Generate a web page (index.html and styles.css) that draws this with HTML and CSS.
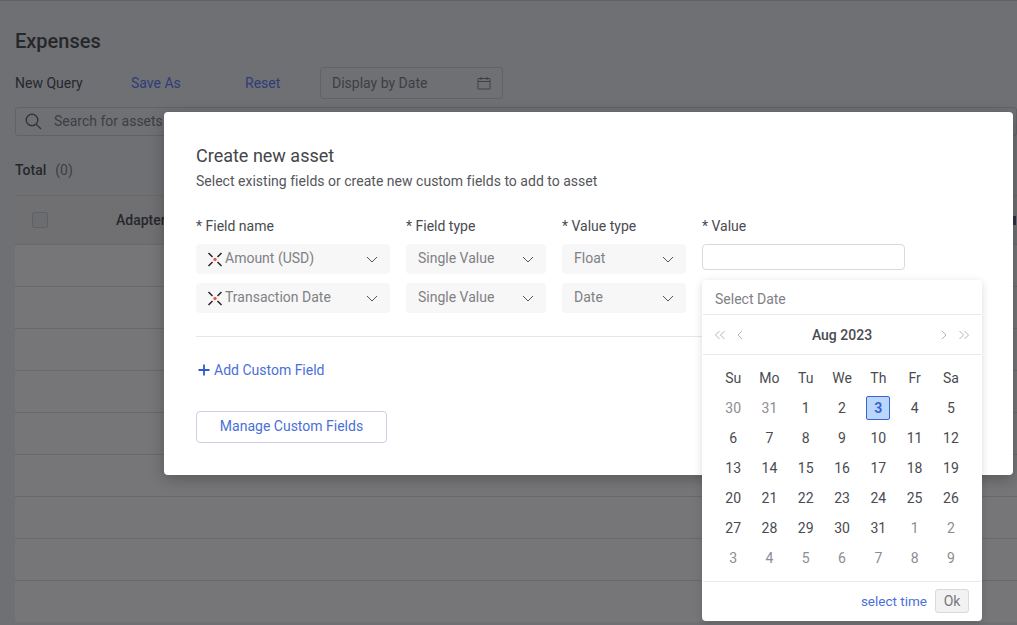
FILE: index.html
```html
<!DOCTYPE html>
<html lang="en">
<head>
    <meta charset="UTF-8">
    <title>Expenses</title>
    <link rel="stylesheet" href="styles.css">
</head>
<body>
    <div class="page">
        <h1>Expenses</h1>
        <div class="toolbar">
            <span class="query-name">New Query</span>
            <a class="link save-as">Save As</a>
            <a class="link reset">Reset</a>
            <div class="date-filter">
                <span>Display by Date</span>
                <svg width="14" height="14" viewBox="0 0 14 14" fill="none" stroke="#3f4044" stroke-width="1">
                    <rect x="1" y="2.5" width="12" height="10.5" rx="0.5"/>
                    <path d="M1 5.5h12M4 1v3M10 1v3"/>
                </svg>
            </div>
        </div>
        <div class="search">
            <svg width="18" height="18" viewBox="0 0 18 18" fill="none" stroke="#35363a" stroke-width="1.4">
                <circle cx="7" cy="7" r="5.8"/>
                <path d="M11.2 11.2l4.8 4.8"/>
            </svg>
            <span class="search-text">Search for assets</span>
        </div>
        <div class="total"><b>Total</b><span>(0)</span></div>
        <div class="table">
            <div class="table-head">
                <span class="checkbox"></span>
                <span class="col-title">Adapter</span>
                <span class="col-sliver"></span>
            </div>
            <div class="row"></div>
            <div class="row"></div>
            <div class="row"></div>
            <div class="row"></div>
            <div class="row"></div>
            <div class="row"></div>
            <div class="row"></div>
            <div class="row"></div>
            <div class="row"></div>
        </div>
    </div>

    <div class="modal">
        <h2>Create new asset</h2>
        <p class="subtitle">Select existing fields or create new custom fields to add to asset</p>

        <div class="fields">
            <div class="field col-name">
                <label>* Field name</label>
                <div class="select">
                    <svg class="field-icon" width="16" height="15" viewBox="0 0 16 15" fill="none">
                        <path d="M1.5 1l4 4M14.5 1l-4 4M1.5 14l4-4M14.5 14l-4-4" stroke="#23242a" stroke-width="1.5"/>
                        <circle cx="8" cy="7.5" r="1.7" fill="#e8603c"/>
                    </svg>
                    <span class="value">Amount (USD)</span>
                    <svg class="arrow" width="12" height="7" viewBox="0 0 12 7" fill="none" stroke="#55565a"><path d="M1 1l5 5 5-5"/></svg>
                </div>
                <div class="select">
                    <svg class="field-icon" width="16" height="15" viewBox="0 0 16 15" fill="none">
                        <path d="M1.5 1l4 4M14.5 1l-4 4M1.5 14l4-4M14.5 14l-4-4" stroke="#23242a" stroke-width="1.5"/>
                        <circle cx="8" cy="7.5" r="1.7" fill="#e8603c"/>
                    </svg>
                    <span class="value">Transaction Date</span>
                    <svg class="arrow" width="12" height="7" viewBox="0 0 12 7" fill="none" stroke="#55565a"><path d="M1 1l5 5 5-5"/></svg>
                </div>
            </div>
            <div class="field col-type">
                <label>* Field type</label>
                <div class="select">
                    <span class="value">Single Value</span>
                    <svg class="arrow" width="12" height="7" viewBox="0 0 12 7" fill="none" stroke="#55565a"><path d="M1 1l5 5 5-5"/></svg>
                </div>
                <div class="select">
                    <span class="value">Single Value</span>
                    <svg class="arrow" width="12" height="7" viewBox="0 0 12 7" fill="none" stroke="#55565a"><path d="M1 1l5 5 5-5"/></svg>
                </div>
            </div>
            <div class="field col-value-type">
                <label>* Value type</label>
                <div class="select">
                    <span class="value">Float</span>
                    <svg class="arrow" width="12" height="7" viewBox="0 0 12 7" fill="none" stroke="#55565a"><path d="M1 1l5 5 5-5"/></svg>
                </div>
                <div class="select">
                    <span class="value">Date</span>
                    <svg class="arrow" width="12" height="7" viewBox="0 0 12 7" fill="none" stroke="#55565a"><path d="M1 1l5 5 5-5"/></svg>
                </div>
            </div>
            <div class="field col-value">
                <label>* Value</label>
                <div class="text-input"></div>
            </div>
        </div>

        <div class="divider"></div>

        <a class="add-field">
            <svg width="12" height="12" viewBox="0 0 12 12" stroke="#2f5bd0" stroke-width="1.8"><path d="M6 0.5v11M0.5 6h11"/></svg>
            Add Custom Field
        </a>

        <button class="manage-btn">Manage Custom Fields</button>
    </div>

    <div class="calendar">
        <div class="cal-input">Select Date</div>
        <div class="cal-nav">
            <span class="nav-group">
                <svg width="12" height="10" viewBox="0 0 12 10" fill="none" stroke="#b5b5b5"><path d="M5.5 1l-4 4 4 4M10.5 1l-4 4 4 4"/></svg>
                <svg width="6" height="10" viewBox="0 0 6 10" fill="none" stroke="#b5b5b5"><path d="M5 1L1 5l4 4"/></svg>
            </span>
            <span class="cal-month">Aug 2023</span>
            <span class="nav-group">
                <svg width="6" height="10" viewBox="0 0 6 10" fill="none" stroke="#b5b5b5"><path d="M1 1l4 4-4 4"/></svg>
                <svg width="12" height="10" viewBox="0 0 12 10" fill="none" stroke="#b5b5b5"><path d="M1.5 1l4 4-4 4M6.5 1l4 4-4 4"/></svg>
            </span>
        </div>
        <div class="cal-grid">
            <span>Su</span><span>Mo</span><span>Tu</span><span>We</span><span>Th</span><span>Fr</span><span>Sa</span>
            <span class="muted">30</span><span class="muted">31</span><span>1</span><span>2</span><span><b class="today">3</b></span><span>4</span><span>5</span>
            <span>6</span><span>7</span><span>8</span><span>9</span><span>10</span><span>11</span><span>12</span>
            <span>13</span><span>14</span><span>15</span><span>16</span><span>17</span><span>18</span><span>19</span>
            <span>20</span><span>21</span><span>22</span><span>23</span><span>24</span><span>25</span><span>26</span>
            <span>27</span><span>28</span><span>29</span><span>30</span><span>31</span><span class="muted">1</span><span class="muted">2</span>
            <span class="muted">3</span><span class="muted">4</span><span class="muted">5</span><span class="muted">6</span><span class="muted">7</span><span class="muted">8</span><span class="muted">9</span>
        </div>
        <div class="cal-footer">
            <a class="select-time">select time</a>
            <button class="ok-btn">Ok</button>
        </div>
    </div>
</body>
</html>
```
FILE: styles.css
```css
/* Reset */
body, h1, h2, p, button {
    margin: 0;
    padding: 0;
    box-sizing: border-box;
    font-family: 'Roboto', sans-serif;
}

body {
    background: #6f7074;
    height: 625px;
    overflow: hidden;
    font-size: 14px;
    color: #26272b;
}

/* Page behind the overlay */
.page {
    border-top: 1px solid #5f6064;
    padding: 0 0 0 15px;
}

h1 {
    margin-top: 28px;
    font-size: 20px;
    line-height: 24px;
    font-weight: 500;
    color: #26272b;
}

.toolbar {
    display: flex;
    align-items: center;
    height: 32px;
    margin-top: 14px;
}

.query-name {
    width: 116px;
}

.link {
    color: #2f3c78;
}

.save-as {
    width: 114px;
}

.reset {
    width: 75px;
}

.date-filter {
    display: flex;
    align-items: center;
    justify-content: space-between;
    box-sizing: border-box;
    width: 183px;
    height: 32px;
    padding: 0 11px;
    border: 1px solid #626367;
    border-radius: 3px;
    color: #3d3e42;
}

.search {
    display: flex;
    align-items: center;
    gap: 11px;
    box-sizing: border-box;
    height: 29px;
    margin-top: 8px;
    padding-left: 9px;
    border: 1px solid #626367;
    border-radius: 3px;
    color: #3d3e42;
}

.search-text {
    padding-bottom: 2px;
}

.total {
    display: flex;
    gap: 9px;
    margin-top: 25px;
    line-height: 18px;
}

.total b {
    font-weight: 500;
}

.total span {
    color: #3d3e42;
}

.table {
    margin-top: 16px;
    background: #767678;
    border-top: 1px solid #68696c;
}

.table-head {
    display: flex;
    align-items: center;
    height: 48px;
    padding-left: 17px;
    background: #707073;
}

.checkbox {
    box-sizing: border-box;
    width: 16px;
    height: 16px;
    flex-shrink: 0;
    border: 1px solid #5f6063;
    border-radius: 2px;
    background: #6c6d70;
}

.col-title {
    flex-shrink: 0;
    margin-left: 68px;
    font-weight: 500;
    color: #26272b;
}

/* next column header, only its edge shows past the modal */
.col-sliver {
    flex-shrink: 0;
    width: 3px;
    height: 9px;
    margin-left: 847px;
    background: #2a3050;
}

.row {
    box-sizing: border-box;
    height: 42px;
    border-top: 1px solid #69696c;
}

/* Modal */
.modal {
    position: absolute;
    left: 164px;
    top: 112px;
    box-sizing: border-box;
    width: 849px;
    height: 363px;
    padding: 32px;
    background: #fff;
    border-radius: 4px;
    box-shadow: 0 4px 15px rgba(0, 0, 0, 0.25);
}

h2 {
    font-size: 18px;
    line-height: 24px;
    font-weight: 400;
    color: #44454a;
}

.subtitle {
    margin-top: 3px;
    line-height: 20px;
    letter-spacing: 0.015px;
    color: #55565a;
}

.fields {
    display: flex;
    gap: 16px;
    margin-top: 25px;
}

.field label {
    display: block;
    line-height: 20px;
    margin-bottom: 8px;
    color: #4a4b50;
}

.col-name {
    width: 194px;
}

.col-type {
    width: 140px;
}

.col-value-type {
    width: 124px;
}

.col-value {
    width: 203px;
}

.select {
    display: flex;
    align-items: center;
    height: 30px;
    margin-bottom: 9px;
    padding: 0 12px;
    background: #f7f7f7;
    border-radius: 4px;
    color: #808185;
}

.field-icon {
    margin-left: -1px;
    margin-right: 2px;
    flex-shrink: 0;
}

.value {
    flex: 1;
    padding-bottom: 2px;
}

.text-input {
    box-sizing: border-box;
    height: 26px;
    border: 1px solid #d9d9d9;
    border-radius: 4px;
}

.divider {
    height: 1px;
    margin-top: 14px;
    width: 786px;
    background: #e6e6e8;
}

.add-field {
    display: flex;
    align-items: center;
    gap: 4px;
    margin-top: 23px;
    padding-left: 2px;
    line-height: 20px;
    color: #4a70d8;
}

.manage-btn {
    display: block;
    width: 191px;
    height: 32px;
    margin-top: 31px;
    padding-bottom: 2px;
    background: #fff;
    border: 1px solid #cdd0e4;
    border-radius: 4px;
    font-size: 14px;
    color: #4a70d8;
}

/* Date picker */
.calendar {
    position: absolute;
    left: 702px;
    top: 280px;
    box-sizing: border-box;
    width: 280px;
    height: 341px;
    padding: 0 1px;
    background: #fff;
    border-radius: 4px;
    box-shadow: 0 2px 8px rgba(0, 0, 0, 0.15);
}

.cal-input {
    height: 34px;
    padding-left: 12px;
    line-height: 38px;
    color: #808185;
    border-bottom: 1px solid #e8e8e8;
}

.cal-nav {
    display: flex;
    align-items: center;
    justify-content: space-between;
    height: 39px;
    padding: 0 11px;
    border-bottom: 1px solid #e8e8e8;
}

.nav-group {
    display: flex;
    align-items: center;
    justify-content: space-between;
    width: 29px;
}

.cal-month {
    font-weight: 500;
    color: #4a4b50;
}

.cal-grid {
    display: grid;
    grid-template-columns: repeat(7, 36.3px);
    grid-auto-rows: 30px;
    padding: 8px 12px;
    border-bottom: 1px solid #e8e8e8;
    color: #4a4b50;
}

.cal-grid span {
    display: flex;
    align-items: center;
    justify-content: center;
}

.cal-grid .muted {
    color: #8c8d91;
}

.today {
    display: flex;
    align-items: center;
    justify-content: center;
    box-sizing: border-box;
    width: 24px;
    height: 24px;
    background: #b9d7fb;
    border: 1px solid #3a63d6;
    border-radius: 2px;
    color: #3a63d6;
    font-weight: 700;
}

.cal-footer {
    display: flex;
    align-items: center;
    justify-content: flex-end;
    gap: 8px;
    height: 38px;
    padding-right: 12px;
}

.select-time {
    font-size: 13.5px;
    color: #4a70d8;
}

.ok-btn {
    width: 34px;
    height: 24px;
    background: #f2f2f2;
    border: 1px solid #d9d9d9;
    border-radius: 3px;
    font-size: 14px;
    color: #77787c;
}
```
